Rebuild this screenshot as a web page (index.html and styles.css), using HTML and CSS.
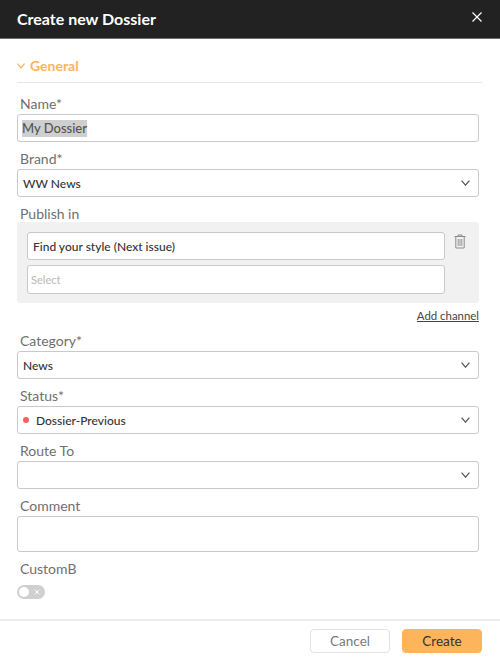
FILE: index.html
```html
<!DOCTYPE html>
<html lang="en">
<head>
<meta charset="utf-8">
<title>Create new Dossier</title>
<link rel="stylesheet" href="styles.css">
</head>
<body>
<div class="dialog">
  <header class="header">
    <h1 class="title">Create new Dossier</h1>
    <svg class="close" width="10" height="10" viewBox="0 0 10 10"><path d="M.5.5l9 9M9.500.5l-9 9" stroke="#fff" stroke-width="1.200" fill="none"/></svg>
  </header>
  <main class="body">
    <div class="section">
      <svg class="section-chevron" width="8" height="6" viewBox="0 0 8 6"><path d="M.5.7L4 5 7.500.7" stroke="#fdb45a" stroke-width="1.200" fill="none"/></svg>
      <span>General</span>
    </div>
    <div class="field first">
      <label class="label">Name*</label>
      <div class="control name"><span class="selected">My Dossier</span></div>
    </div>
    <div class="field">
      <label class="label">Brand*</label>
      <div class="control select"><span>WW News</span>
        <svg class="chevron" width="9" height="6" viewBox="0 0 9 6"><path d="M.6.6l3.900 4.600L8.400.6" stroke="#555" stroke-width="1.200" fill="none"/></svg>
      </div>
    </div>
    <div class="field">
      <label class="label">Publish in</label>
      <div class="channels">
        <div class="channel-inputs">
          <div class="control inner"><span>Find your style (Next issue)</span></div>
          <div class="control inner placeholder"><span>Select</span></div>
        </div>
        <svg class="trash" width="12" height="15" viewBox="0 0 12 15" fill="none" stroke="#8a8a8a"><path d="M.5 2.500h11M4 2.500V1h4v1.500" stroke-width="1"/><path d="M1.800 2.500v11.500h8.400V2.500z" stroke-width="1"/><path d="M4.200 5v7M6 5v7M7.800 5v7" stroke-width=".9"/></svg>
      </div>
      <div class="add-row"><a class="add-channel">Add channel</a></div>
    </div>
    <div class="field after-add">
      <label class="label">Category*</label>
      <div class="control select"><span>News</span>
        <svg class="chevron" width="9" height="6" viewBox="0 0 9 6"><path d="M.6.6l3.900 4.600L8.400.6" stroke="#555" stroke-width="1.200" fill="none"/></svg>
      </div>
    </div>
    <div class="field">
      <label class="label">Status*</label>
      <div class="control select"><span class="dot"></span><span>Dossier-Previous</span>
        <svg class="chevron" width="9" height="6" viewBox="0 0 9 6"><path d="M.6.6l3.900 4.600L8.400.6" stroke="#555" stroke-width="1.200" fill="none"/></svg>
      </div>
    </div>
    <div class="field">
      <label class="label">Route To</label>
      <div class="control select">
        <svg class="chevron" width="9" height="6" viewBox="0 0 9 6"><path d="M.6.6l3.900 4.600L8.400.6" stroke="#555" stroke-width="1.200" fill="none"/></svg>
      </div>
    </div>
    <div class="field">
      <label class="label">Comment</label>
      <div class="control area"></div>
    </div>
    <div class="field custom">
      <label class="label">CustomB</label>
      <div class="toggle">
        <span class="knob"></span>
        <svg class="toggle-x" width="6" height="6" viewBox="0 0 6 6"><path d="M.7.700l4.600 4.600M5.300.700L.7 5.300" stroke="#fff" stroke-width="1" fill="none"/></svg>
      </div>
    </div>
  </main>
  <footer class="footer">
    <button class="btn cancel">Cancel</button>
    <button class="btn create">Create</button>
  </footer>
</div>
</body>
</html>
```
FILE: styles.css
```css
* { box-sizing: border-box; }
html, body { margin: 0; padding: 0; }
body {
  width: 500px;
  height: 662px;
  background: #fff;
  font-family: Lato, "Open Sans", sans-serif;
  overflow: hidden;
}
.dialog { display: flex; flex-direction: column; height: 662px; }
.header {
  height: 39px;
  flex: none;
  background: #222;
  border-bottom: 1px solid #6e6e6e;
  display: flex;
  align-items: center;
  justify-content: space-between;
  padding: 0 18px 1px 17px;
}
.title { margin: 0; font-size: 16px; font-weight: 700; color: #fff; line-height: 20px; }
.close { display: block; margin-top: -3px; }
.body { flex: 1; padding: 0 21px 0 17px; }
.section {
  height: 44px;
  border-bottom: 1px solid #e6e6e6;
  margin-right: -3px;
  display: flex;
  align-items: center;
  gap: 5px;
  padding-top: 9px;
  font-size: 14px;
  font-weight: 700;
  color: #fdb45a;
}
.section-chevron { display: block; margin-top: 1px; }
.field { margin-top: 7px; }
.field.first { margin-top: 11px; }
.label {
  display: block;
  height: 20px;
  line-height: 20px;
  padding-left: 3px;
  font-size: 14px;
  color: #6f6f6f;
}
.control {
  height: 28px;
  border: 1px solid #c9c9c9;
  border-radius: 3px;
  background: #fff;
  display: flex;
  align-items: center;
  padding: 0 5px;
  font-size: 12px;
  font-weight: 500;
  color: #333;
}
.name { font-size: 13px; color: #555; padding-left: 4px; }
.selected { background: #cfcfcf; line-height: 17px; }
.select { position: relative; }
.chevron { position: absolute; right: 8px; top: 10px; }
.channels {
  height: 81px;
  margin-top: -2px;
  background: #f1f1f1;
  border-radius: 3px;
  padding: 10px 0 0 10px;
  display: flex;
  gap: 9px;
}
.channel-inputs { width: 418px; display: flex; flex-direction: column; gap: 5px; }
.inner { padding-left: 5px; }
.placeholder { height: 29px; color: #bcbcbc; font-size: 11px; padding-left: 3px; }
.trash { display: block; margin-top: 2px; }
.add-row { display: flex; justify-content: flex-end; height: 27px; padding-top: 5px; }
.add-channel { font-size: 11.400px; line-height: 16px; color: #444; text-decoration: underline; }
.field.after-add { margin-top: 1px; }
.dot { width: 6px; height: 6px; border-radius: 50%; background: #f9605f; margin: 0 7px 0 0; }
.area { height: 36px; }
.toggle {
  position: relative;
  width: 28px;
  height: 14px;
  margin-top: 6px;
  border-radius: 7px;
  background: #d0d0d0;
}
.knob { position: absolute; left: 2px; top: 2px; width: 10px; height: 10px; border-radius: 50%; background: #fff; }
.toggle-x { position: absolute; right: 5px; top: 4px; }
.footer {
  height: 43px;
  flex: none;
  border-top: 2px solid #ececec;
  display: flex;
  justify-content: flex-end;
  gap: 12px;
  padding: 8px 18px 0 0;
}
.btn {
  width: 80px;
  height: 24px;
  border-radius: 4px;
  font-family: inherit;
  font-size: 13.500px;
  line-height: 20px;
  padding: 0;
}
.cancel { background: #fff; border: 1px solid #e2e2e2; color: #7a7a7a; }
.create { background: #fdb45a; border: 1px solid #fdb45a; color: #333; }
```
